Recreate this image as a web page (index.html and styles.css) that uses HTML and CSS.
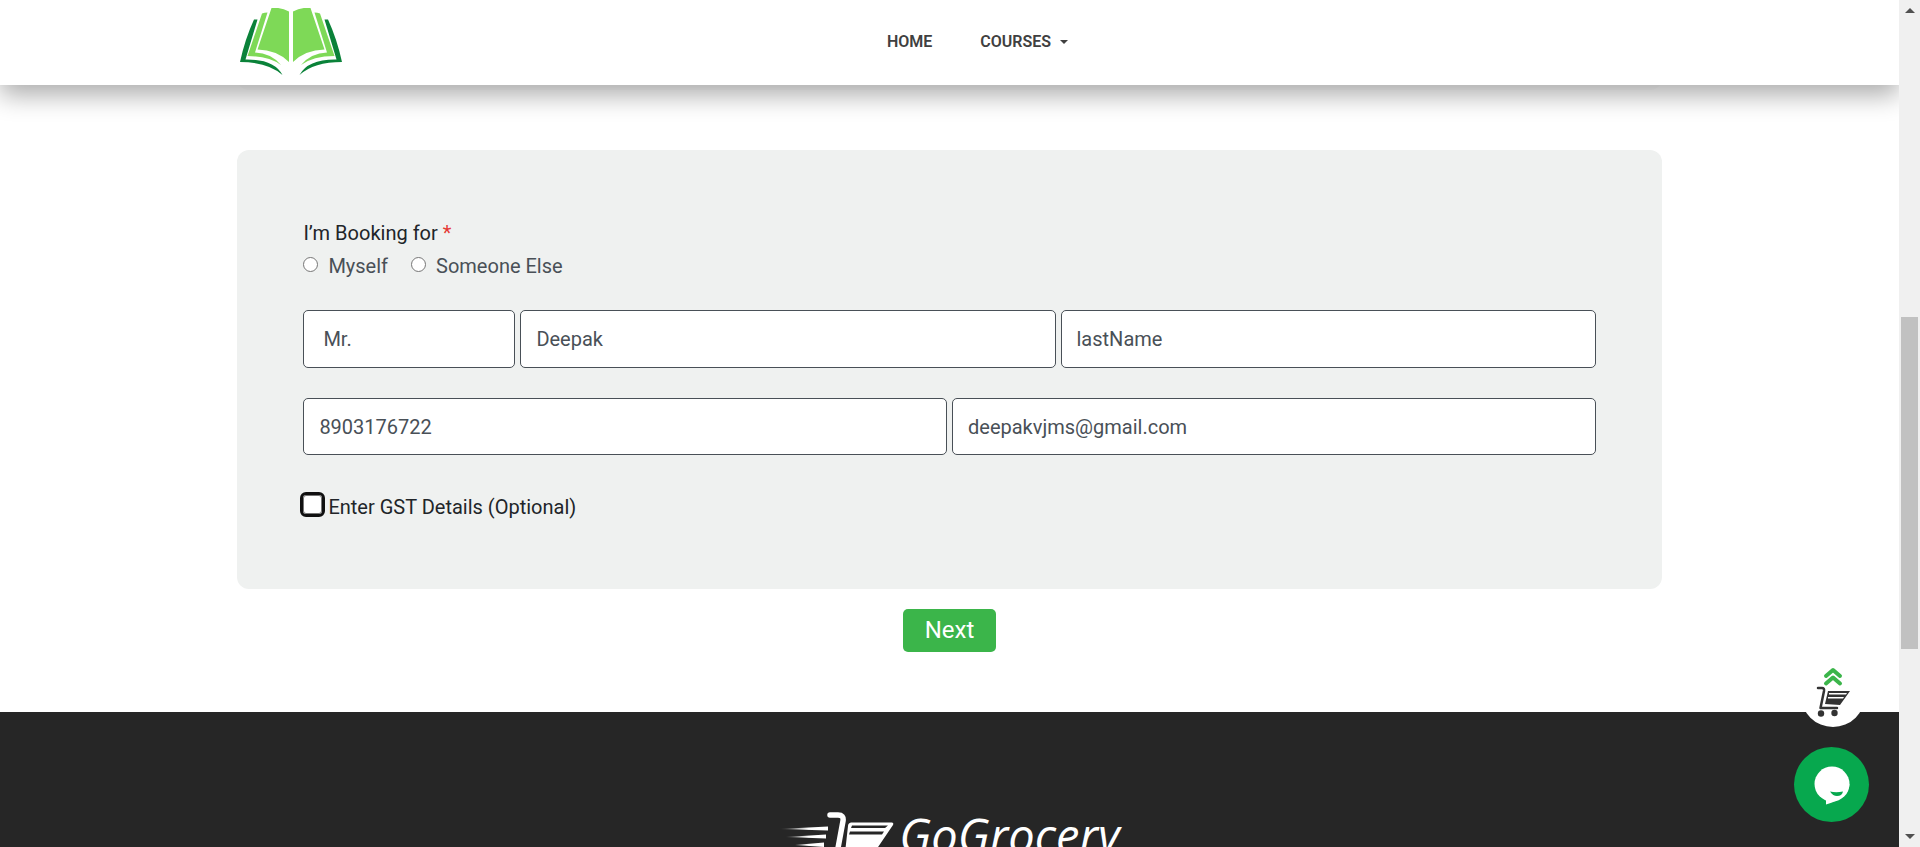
FILE: index.html
```html
<!DOCTYPE html>
<html lang="en">
<head>
<meta charset="utf-8">
<title>GoGrocery - Booking</title>
<link rel="stylesheet" href="styles.css">
</head>
<body>
<div class="viewport">
  <div class="page">
    <header class="header">
      <a class="brand" href="#" aria-label="Home page">
        <svg class="brand-logo" viewBox="0 0 102 68" aria-hidden="true">
          <g id="leaf">
            <path fill="#7ed957" d="M31.500 0Q41-1 49 3.500V54Q37 42 17.500 41.500Z"/>
            <path fill="#7ed957" d="M22 5.500Q24.500 4.500 27.500 4.500L15 44.500Q31 45 41 57Q29 48 7.500 48Z"/>
            <path fill="#0a8239" d="M14 11.500H17.500L5.500 51.500Q34 51 42.500 67Q28 54 0 54Q5 31 14 11.500Z"/>
          </g>
          <use href="#leaf" transform="matrix(-1 0 0 1 102 0)"/>
        </svg>
      </a>
      <nav class="nav">
        <a class="nav-link" href="#">HOME</a>
        <a class="nav-link" href="#">COURSES<span class="caret"></span></a>
      </nav>
    </header>
    <main class="main">
      <section class="panel panel-previous"></section>
      <form class="form">
        <section class="panel">
          <fieldset class="booking">
            <legend class="legend">I’m Booking for <span class="required">*</span></legend>
            <div class="options">
              <label class="option"><input class="radio" type="radio" name="for">Myself</label>
              <label class="option"><input class="radio" type="radio" name="for">Someone Else</label>
            </div>
          </fieldset>
          <div class="row row-name">
            <select class="field field-title" aria-label="Title"><option>Mr.</option></select>
            <input class="field" type="text" aria-label="First name" value="Deepak">
            <input class="field" type="text" aria-label="Last name" value="lastName">
          </div>
          <div class="row row-contact">
            <input class="field" type="tel" aria-label="Phone" value="8903176722">
            <input class="field" type="email" aria-label="Email" value="deepakvjms@gmail.com">
          </div>
          <label class="gst"><input class="check" type="checkbox">Enter GST Details (Optional)</label>
        </section>
        <button class="next" type="button">Next</button>
      </form>
    </main>
    <footer class="footer">
      <svg class="footer-cart" viewBox="0 0 116 66" aria-hidden="true">
        <defs>
          <linearGradient id="fade"><stop offset="0" stop-color="#fff" stop-opacity="0"/><stop offset=".6" stop-color="#fff"/></linearGradient>
        </defs>
        <path fill="url(#fade)" d="M0 18L49 15.500V19.500ZM7 26L47 23.500V27.500ZM16 34L45 31.500V36Z"/>
        <path fill="none" stroke="#fff" stroke-width="5.500" stroke-linecap="round" stroke-linejoin="round" d="M51 4H59Q65 4 64 10L57 48H98"/>
        <path fill="#fff" fill-rule="evenodd" d="M72 11.500H113Q115 12 114 14L95 42H66L69 15Q69 12 72 11.500ZM73 14.500L72 17H106L109 14.500ZM71 20.500L70 23.500H103L105 20.500Z"/>
        <circle cx="62" cy="59" r="5" fill="#fff"/><circle cx="90" cy="59" r="5" fill="#fff"/>
      </svg>
      <span class="footer-name">GoGrocery</span>
    </footer>
    <div class="floating">
      <a class="to-top" href="#" aria-label="Back to top">
        <svg viewBox="0 0 64 64" aria-hidden="true">
          <path fill="none" stroke="#3bb54a" stroke-width="4" stroke-linecap="round" stroke-linejoin="round" d="M25 13L32 7L39 13M25 20.500L32 14.500L39 20.500"/>
          <path fill="none" stroke="#333" stroke-width="2.500" stroke-linecap="round" stroke-linejoin="round" d="M17 25H21Q23.500 25 23 28L19.500 45H36"/>
          <path fill="#333" fill-rule="evenodd" d="M27 28H49L39 42L24 41ZM28 30V31.500H45L46 30ZM27 34V35.500H42L43 34Z"/>
          <circle cx="20" cy="50.500" r="3.200" fill="#333"/><circle cx="33.500" cy="50" r="3.200" fill="#333"/>
        </svg>
      </a>
      <button class="chat" type="button" aria-label="Chat">
        <svg class="chat-icon" viewBox="0 0 75 75" aria-hidden="true">
          <circle cx="38" cy="37" r="17.500" fill="#fff"/>
          <path fill="#fff" d="M55.500 37Q55 51 32 57.500V50Z"/>
          <path fill="#07a84e" d="M36 44.500Q42 46 49 44.500Q48 49 43 49Q39 49 36 44.500Z"/>
        </svg>
      </button>
    </div>
  </div>
  <div class="scrollbar" aria-hidden="true">
    <span class="arrow arrow-up"></span>
    <span class="thumb"></span>
    <span class="arrow arrow-down"></span>
  </div>
</div>
</body>
</html>
```
FILE: styles.css
```css
* { box-sizing: border-box; }
body { margin: 0; font-family: Roboto, "Liberation Sans", sans-serif; font-size: 20px; line-height: 30px; color: #212529; background: #fff; }
.viewport { display: flex; height: 100vh; overflow: hidden; }
.page { flex: 1; min-width: 0; position: relative; overflow: hidden; }
.header { position: absolute; top: 0; left: 0; right: 0; z-index: 2; height: 85px; background: #fff; box-shadow: 0 10px 24px rgba(0, 0, 0, .33); display: grid; grid-template-columns: 1fr auto 1fr; align-items: start; padding: 8px 12.5% 0; }
.brand { margin-left: 3px; line-height: 0; }
.brand-logo { width: 102px; height: 68px; }
.nav { display: flex; gap: 48px; padding: 18px 0 0 56px; }
.nav-link { display: flex; align-items: center; color: #404040; font-size: 16px; line-height: 32px; font-weight: 600; text-decoration: none; }
.caret { margin-left: 9px; border: 4px solid transparent; border-top-color: #404040; border-bottom: 0; }
.main { padding: 0 12.5%; }
.panel { background: #eff1f0; border-radius: 12px; padding: 67px 66px 66px; }
.panel-previous { height: 90px; padding: 0; margin-bottom: 60px; background: #fcfcfc; }
.form { display: flex; flex-direction: column; }
.booking { border: 0; margin: 0 0 27px; padding: 0; min-width: 0; }
.legend { padding: 0; line-height: 32px; }
.required { color: #e53935; }
.options { display: flex; gap: 23px; color: #495057; line-height: 34px; }
.option { display: flex; align-items: center; }
.radio { width: 15px; height: 15px; margin: 0 10px 4px 0; appearance: none; border: 1px solid #767676; border-radius: 50%; background: #fff; }
.row { display: grid; gap: 5px; margin-bottom: 30px; }
.row-name { grid-template-columns: 212px 1fr 1fr; }
.row-contact { grid-template-columns: 1fr 1fr; margin-bottom: 36px; }
.field { width: 100%; min-width: 0; height: 58px; border: 1px solid #495057; border-radius: 5px; padding: 0 15px; background: #fff; color: #495057; font: inherit; appearance: none; }
.row-contact .field { height: 57px; }
.field-title { padding-left: 19px; }
.gst { display: flex; align-items: center; line-height: 32px; }
.check { appearance: none; width: 19px; height: 19px; margin: 0 6px 5px 0; border: 1px solid #767676; border-radius: 3px; background: #fff; outline: 3px solid #101010; outline-offset: 0; }
.next { align-self: center; margin: 20px 0 60px; width: 93px; height: 43px; border: 0; border-radius: 5px; background: #3bb54a; color: #fff; font: 400 24px/43px Roboto, sans-serif; padding: 0; }
.footer { background: #262626; min-height: 400px; display: flex; justify-content: center; align-items: flex-start; gap: 4px; padding-top: 99px; }
.footer-cart { width: 116px; height: 66px; }
.footer-name { color: #fff; font: italic 500 47px/48px "Open Sans", sans-serif; }
.floating { position: absolute; right: 30px; bottom: 25px; display: flex; flex-direction: column; align-items: center; gap: 20px; }
.to-top { width: 64px; height: 64px; margin-left: 3px; border-radius: 50%; background: #fff; }
.chat { width: 75px; height: 75px; padding: 0; border: 0; border-radius: 50%; background: #07a84e; }
.chat-icon { display: block; width: 100%; }
.scrollbar { width: 21px; background: #f0f0f0; display: flex; flex-direction: column; align-items: center; padding: 8px 0; }
.arrow { border: 5px solid transparent; }
.arrow-up { border-top: 0; border-bottom-color: #505050; }
.arrow-down { border-bottom: 0; border-top-color: #505050; margin-top: auto; }
.thumb { width: 17px; height: 40%; background: #c1c1c1; margin-top: 304px; }
```
